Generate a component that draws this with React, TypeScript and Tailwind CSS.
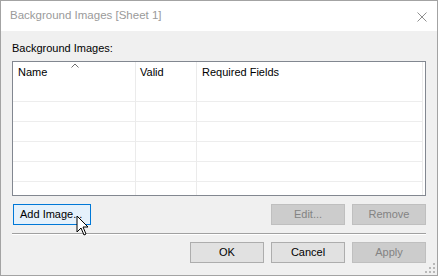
import React from 'react';

const font = { fontFamily: '"Liberation Sans", Arial, sans-serif' };

type BtnProps = { label: string; disabled?: boolean; hot?: boolean; className?: string };

const DlgButton: React.FC<BtnProps> = ({ label, disabled, hot, className = '' }) => {
  let tone = 'bg-[#e1e1e1] border-[#adadad] text-black';
  if (disabled) tone = 'bg-[#cccccc] border-[#bfbfbf] text-[#838383]';
  if (hot) tone = 'bg-[#e5f1fb] border-[#0078d7] text-black';
  return (
    <div
      className={`h-[21px] border flex items-center justify-center text-[11px] leading-none ${tone} ${className}`}
    >
      {label}
    </div>
  );
};

const rows = [0, 1, 2, 3, 4, 5];

const Column: React.FC<{ title: string; className: string; pad: string }> = ({ title, className, pad }) => (
  <div className={`flex flex-col ${className}`}>
    <div className={`h-[20px] shrink-0 flex items-center text-[11px] text-black ${pad}`}>{title}</div>
    {rows.map(r => (
      <div key={r} className="h-[20px] shrink-0 border-b border-[#ededed]" />
    ))}
  </div>
);

export default function App() {
  return (
    <div className="w-[438px] h-[276px] bg-white" style={font}>
      <div className="relative w-[438px] h-[276px] border border-[#a3a3a3] flex flex-col">
        {/* title bar */}
        <div className="h-[30px] bg-white flex items-center justify-between pl-[9px] pr-[10px]">
          <span className="text-[11.5px] text-[#9a9a9a]">Background Images [Sheet 1]</span>
          <svg width="10" height="10" viewBox="0 0 10 10" className="mt-[1px]">
            <path d="M0.5 0.5 L9.5 9.5 M9.5 0.5 L0.5 9.5" stroke="#8f8f8f" strokeWidth="1" />
          </svg>
        </div>

        {/* body */}
        <div className="flex-1 bg-[#f0f0f0] px-[11px] pt-[10px] flex flex-col">
          <div className="h-[15px] leading-[15px] text-[11px] text-black">Background Images:</div>

          {/* list view */}
          <div className="mt-[5px] h-[135px] border border-[#828790] bg-white overflow-hidden">
            <div className="w-[410px] h-full flex border-r border-[#ebebeb]">
              <Column title="Name" className="w-[123px] border-r border-[#ebebeb]" pad="pl-[5px]" />
              <Column title="Valid" className="w-[61px] border-r border-[#ebebeb]" pad="pl-[4px]" />
              <Column title="Required Fields" className="flex-1" pad="pl-[5px]" />
            </div>
          </div>

          {/* list buttons */}
          <div className="mt-[8px] flex items-center">
            <DlgButton label="Add Image..." hot className="ml-[1px] w-[78px] justify-start pl-[6px]" />
            <div className="flex-1" />
            <DlgButton label="Edit..." disabled className="w-[74px]" />
            <DlgButton label="Remove" disabled className="w-[74px] ml-[7px]" />
          </div>

          <div className="mt-[8px] border-t border-[#a0a0a0] border-b border-b-white" />

          <div className="mt-[7px] flex justify-end gap-[7px]">
            <DlgButton label="OK" className="w-[74px]" />
            <DlgButton label="Cancel" className="w-[74px]" />
            <DlgButton label="Apply" disabled className="w-[74px]" />
          </div>
        </div>

        {/* sort caret */}
        <svg className="absolute left-[70px] top-[62px]" width="8" height="5" viewBox="0 0 8 5">
          <path d="M0.5 4.5 L4 1 L7.5 4.5" fill="none" stroke="#6d6d6d" strokeWidth="1" />
        </svg>

        {/* size grip */}
        <svg className="absolute right-[2px] bottom-[2px]" width="10" height="10" viewBox="0 0 10 10">
          <rect x="8" y="0" width="2" height="2" fill="#b8b8b8" />
          <rect x="4" y="4" width="2" height="2" fill="#b8b8b8" />
          <rect x="8" y="4" width="2" height="2" fill="#b8b8b8" />
          <rect x="0" y="8" width="2" height="2" fill="#b8b8b8" />
          <rect x="4" y="8" width="2" height="2" fill="#b8b8b8" />
          <rect x="8" y="8" width="2" height="2" fill="#b8b8b8" />
        </svg>

        {/* mouse pointer */}
        <svg className="absolute left-[75px] top-[214px]" width="13" height="21" viewBox="0 0 13 21">
          <path
            d="M1 1 L1 17 L5 13 L8 20 L10 19 L7 12 L12 12 Z"
            fill="white"
            stroke="black"
            strokeWidth="1"
            strokeLinejoin="miter"
          />
        </svg>
      </div>
    </div>
  );
}
